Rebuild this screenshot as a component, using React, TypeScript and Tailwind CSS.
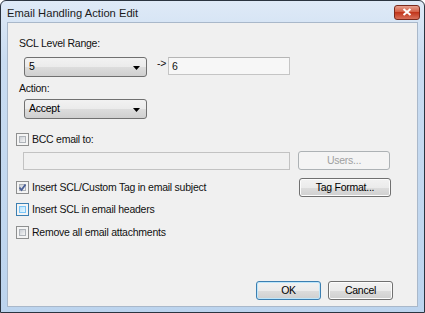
import React from "react";

const font = { fontFamily: '"Liberation Sans", Arial, sans-serif' };

function CheckBox({ checked = false, hover = false }: { checked?: boolean; hover?: boolean }) {
  return (
    <div
      className={
        "relative w-[13px] h-[13px] shrink-0 border bg-[#f4f4f4] " +
        (hover ? "border-[#3c7fb1]" : "border-[#8e8f8f]")
      }
    >
      <div
        className={
          "absolute left-[2px] top-[2px] w-[7px] h-[7px] border " +
          (hover
            ? "border-[#79c6f9] bg-[linear-gradient(135deg,#b8e2fc,#e9f7fe)]"
            : "border-[#aeb3b9] bg-[linear-gradient(135deg,#cbcfd5,#f6f6f6)]")
        }
      />
      {checked && (
        <svg className="absolute left-[1px] top-[1px]" width="9" height="9" viewBox="0 0 9 9">
          <path d="M1.5 4.5 L3.5 7 L7.5 1.5" stroke="#4a5f97" strokeWidth="1.8" fill="none" />
        </svg>
      )}
    </div>
  );
}

function Select({ value }: { value: string }) {
  return (
    <div className="relative ml-[16px] w-[123px] h-[20px] rounded-[3px] border border-[#707070] bg-[linear-gradient(#f2f2f2,#ebebeb_50%,#dddddd_50%,#cfcfcf)] flex items-center pl-[4px] text-[#000]">
      <span>{value}</span>
      <svg className="absolute right-[6px] top-[8px]" width="7" height="4" viewBox="0 0 7 4">
        <path d="M0 0 H7 L3.5 4 Z" fill="#000" />
      </svg>
    </div>
  );
}

function Button({
  children,
  disabled = false,
  def = false,
  className = "",
}: {
  children: React.ReactNode;
  disabled?: boolean;
  def?: boolean;
  className?: string;
}) {
  let cls =
    "h-[19px] rounded-[3px] border flex items-center justify-center " + className + " ";
  if (disabled) cls += "border-[#adb2b5] bg-[#f4f4f4] text-[#a0a0a0]";
  else if (def)
    cls +=
      "border-[#3c7fb1] shadow-[inset_0_0_0_1px_#bde6fb] bg-[linear-gradient(#f2f2f2,#ebebeb_50%,#dddddd_50%,#cfcfcf)] text-black";
  else
    cls +=
      "border-[#707070] shadow-[inset_0_0_0_1px_#fcfcfc] bg-[linear-gradient(#f2f2f2,#ebebeb_50%,#dddddd_50%,#cfcfcf)] text-black";
  return <div className={cls}>{children}</div>;
}

export default function App() {
  return (
    <div
      className="w-[425px] h-[313px] flex flex-col rounded-t-[6px] border border-[#2b3440] bg-[linear-gradient(#dfeaf7,#c9dcf1_60px,#bcd4ee)] overflow-hidden"
      style={font}
    >
      {/* title bar */}
      <div className="h-[21px] shrink-0 flex items-center justify-between pl-[6px] pr-[4px]">
        <span className="text-[11.2px] text-[#1b1b1b] mt-[3px]">Email Handling Action Edit</span>
        <div className="w-[26px] h-[15px] mt-[1px] rounded-[3px] border border-[#7a2a1d] bg-[linear-gradient(#e7a08f,#d2593f_50%,#c2361c_50%,#d8705a)] flex items-center justify-center">
          <svg width="10" height="8" viewBox="0 0 10 8">
            <path d="M1.5 1 L8.5 7 M8.5 1 L1.5 7" stroke="#fff" strokeWidth="2" />
          </svg>
        </div>
      </div>

      {/* content */}
      <div className="flex-1 mx-[6px] mb-[5px] border border-[#a9b8ca] bg-[#f0f0f0] flex flex-col text-[10.5px] tracking-[-0.25px] text-[#111]">
        <div className="h-[13px] leading-[13px] mt-[14px] ml-[11px]">SCL Level Range:</div>
        <div className="flex items-start mt-[7px]">
          <Select value="5" />
          <span className="ml-[10px] w-[11px] leading-[10px] mt-[1px]">-&gt;</span>
          <div className="w-[122px] h-[18px] border border-[#c5c5c5] border-t-[#b5b5b5] bg-[#f7f7f7] pl-[3px] leading-[16px]">
            6
          </div>
        </div>
        <div className="h-[13px] leading-[13px] mt-[5px] ml-[11px]">Action:</div>
        <div className="mt-[4px]">
          <Select value="Accept" />
        </div>

        <div className="flex items-center h-[13px] mt-[14px] ml-[8px] gap-[3px]">
          <CheckBox />
          <span>BCC email to:</span>
        </div>
        <div className="flex items-center mt-[5px]">
          <div className="ml-[15px] w-[267px] h-[18px] border border-[#c2c2c2] bg-[#f0f0f0]" />
          <Button disabled className="ml-[8px] w-[92px] h-[18px]">
            Users...
          </Button>
        </div>
        <div className="flex items-center mt-[8px] h-[19px]">
          <div className="flex-1 flex items-center ml-[8px] gap-[3px]">
            <CheckBox checked />
            <span>Insert SCL/Custom Tag in email subject</span>
          </div>
          <Button className="w-[92px] mr-[26px]">Tag Format...</Button>
        </div>
        <div className="flex items-center h-[13px] mt-[6px] ml-[8px] gap-[3px]">
          <CheckBox hover />
          <span>Insert SCL in email headers</span>
        </div>
        <div className="flex items-center h-[13px] mt-[10px] ml-[8px] gap-[3px]">
          <CheckBox />
          <span>Remove all email attachments</span>
        </div>

        <div className="mt-auto mb-[6px] flex justify-end gap-[7px] mr-[24px]">
          <Button def className="w-[65px]">
            OK
          </Button>
          <Button className="w-[65px]">Cancel</Button>
        </div>
      </div>
    </div>
  );
}
